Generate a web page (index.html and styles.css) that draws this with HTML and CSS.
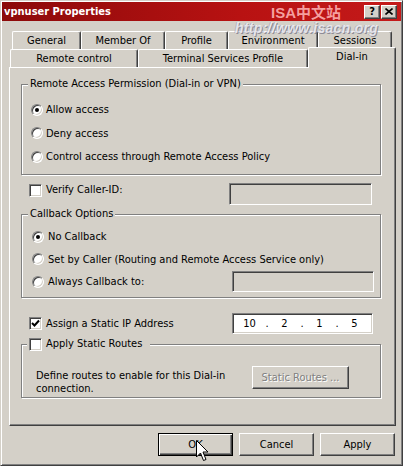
FILE: index.html
```html
<!DOCTYPE html>
<html lang="en">
<head>
    <meta charset="UTF-8">
    <title>vpnuser Properties</title>
    <link rel="stylesheet" href="styles.css">
</head>
<body>

    <div class="window">
        <div class="titlebar">
            <span class="title">vpnuser Properties</span>
            <div class="caption-buttons">
                <span class="cap-btn">?</span>
                <span class="cap-btn">
                    <svg width="8" height="7" viewBox="0 0 8 7"><path d="M0.5 0.5 L7.5 6.5 M7.5 0.5 L0.5 6.5" stroke="#000" stroke-width="1.6"/></svg>
                </span>
            </div>
        </div>

        <div class="watermark">
            <span class="wm-name">ISA中文站</span>
            <span class="wm-url">http://www.isacn.org</span>
        </div>

        <div class="tabs">
            <div class="tab-row back">
                <span class="tab w-general">General</span>
                <span class="tab w-member">Member Of</span>
                <span class="tab w-profile">Profile</span>
                <span class="tab w-env">Environment</span>
                <span class="tab w-sessions">Sessions</span>
            </div>
            <div class="tab-row front">
                <span class="tab w-remote">Remote control</span>
                <span class="tab w-terminal">Terminal Services Profile</span>
                <span class="tab w-dialin active">Dial-in</span>
            </div>
        </div>

        <div class="panel">
            <div class="group g-access">
                <div class="group-title">Remote Access Permission (Dial-in or VPN)</div>
                <div class="options">
                    <div class="option"><span class="radio checked"></span>Allow access</div>
                    <div class="option"><span class="radio"></span>Deny access</div>
                    <div class="option"><span class="radio"></span>Control access through Remote Access Policy</div>
                </div>
            </div>

            <div class="line-row verify">
                <span class="check"></span>
                <span class="label">Verify Caller-ID:</span>
                <span class="field disabled"></span>
            </div>

            <div class="group g-callback">
                <div class="group-title">Callback Options</div>
                <div class="options">
                    <div class="option"><span class="radio checked"></span>No Callback</div>
                    <div class="option"><span class="radio"></span>Set by Caller (Routing and Remote Access Service only)</div>
                    <div class="option"><span class="radio"></span>Always Callback to:<span class="field disabled"></span></div>
                </div>
            </div>

            <div class="line-row assign">
                <span class="check">
                    <svg width="9" height="9" viewBox="0 0 9 9"><path d="M1 4 L3.5 6.5 L8 1.5" fill="none" stroke="#000" stroke-width="2"/></svg>
                </span>
                <span class="label">Assign a Static IP Address</span>
                <span class="field ip">
                    <span class="octet">10</span><span class="dot">.</span>
                    <span class="octet">2</span><span class="dot">.</span>
                    <span class="octet">1</span><span class="dot">.</span>
                    <span class="octet">5</span>
                </span>
            </div>

            <div class="group g-routes">
                <div class="group-title"><span class="check"></span><span class="label">Apply Static Routes</span></div>
                <div class="routes-row">
                    <p class="routes-text">Define routes to enable for this Dial-in<br>connection.</p>
                    <button class="btn" disabled>Static Routes ...</button>
                </div>
            </div>
        </div>

        <div class="actions">
            <button class="btn default">OK</button>
            <button class="btn">Cancel</button>
            <button class="btn">Apply</button>
        </div>

        <!-- mouse pointer resting on OK -->
        <svg class="pointer" width="13" height="22" viewBox="0 0 13 22">
            <path d="M0.5 0.5 L0.5 17 L4.5 13 L7.5 20.5 L10 19.5 L7 12 L12 12 Z" fill="#fff" stroke="#000" stroke-width="1"/>
        </svg>
    </div>

</body>
</html>
```

FILE: styles.css
```css
* {
    margin: 0;
    padding: 0;
    box-sizing: border-box;
}

body {
    background-color: #d4d0c8;
    font-family: "DejaVu Sans Condensed", "DejaVu Sans", "Liberation Sans", sans-serif;
    font-stretch: condensed;
    font-size: 11px;
    color: #000;
}

.window {
    position: relative;
    width: 403px;
    height: 466px;
    padding: 1px;
    background-color: #d4d0c8;
    border: 1px solid;
    border-color: #d4d0c8 #404040 #404040 #d4d0c8;
    box-shadow: inset 1px 1px #fff, inset -1px -1px #808080;
}

/* title bar */
.titlebar {
    display: flex;
    align-items: center;
    height: 19px;
    padding: 0 4px 0 2px;
    background: linear-gradient(to right, #8c0a0a, #b81212 60%, #c41a1a);
}

.title {
    color: #fff;
    font-weight: bold;
}

.caption-buttons {
    display: flex;
    gap: 1px;
    margin-left: auto;
}

.cap-btn {
    display: flex;
    justify-content: center;
    align-items: center;
    width: 16px;
    height: 14px;
    background-color: #d4d0c8;
    border: 1px solid;
    border-color: #fff #404040 #404040 #fff;
    box-shadow: inset -1px -1px #808080;
    font-weight: bold;
    font-size: 11px;
    line-height: 1;
}

/* watermark stamped over the top of the dialog */
.watermark span {
    position: absolute;
    font-family: "Liberation Sans", "Noto Sans CJK SC", sans-serif;
    font-weight: bold;
    white-space: nowrap;
}

.wm-name {
    left: 270px;
    top: 0;
    font-size: 15px;
    color: rgba(255, 185, 185, 0.85);
}

.wm-url {
    left: 234px;
    top: 19px;
    font-size: 14px;
    font-style: italic;
    letter-spacing: 0.3px;
    color: rgba(245, 245, 250, 0.8);
    text-shadow: 1px 1px rgba(110, 110, 130, 0.7), -1px 0 rgba(150, 150, 170, 0.5);
}

/* tabs */
.tabs {
    padding-top: 10px;
}

.tab-row {
    display: flex;
    align-items: flex-start;
    height: 18px;
}

.tab-row.back {
    margin-left: 10px;
}

.tab-row.front {
    margin-left: 8px;
}

.tab {
    display: flex;
    justify-content: center;
    align-items: center;
    height: 18px;
    background-color: #d4d0c8;
    border-top: 1px solid #fff;
    border-left: 1px solid #fff;
    border-right: 1px solid #404040;
    border-radius: 2px 2px 0 0;
    box-shadow: inset -1px 0 #808080;
    white-space: nowrap;
}

.tab.active {
    position: relative;
    z-index: 1;
    height: 21px;
    margin-top: -2px;
    padding-bottom: 3px;
}

.w-general { width: 69px; }
.w-member { width: 84px; }
.w-profile { width: 63px; }
.w-env { width: 90px; }
.w-sessions { width: 74px; }
.w-remote { width: 128px; }
.w-terminal { width: 170px; }
.w-dialin { width: 88px; }

/* tab page */
.panel {
    width: 387px;
    height: 359px;
    margin-left: 7px;
    padding-left: 11px;
    border: 1px solid;
    border-color: #fff #404040 #404040 #fff;
    box-shadow: inset -1px -1px #808080;
}

.group {
    width: 360px;
    border: 1px solid #808080;
    box-shadow: 1px 1px #fff, inset 1px 1px #fff;
}

.group-title {
    width: fit-content;
    margin: -8px 0 0 6px;
    padding: 0 2px;
    line-height: 14px;
    background-color: #d4d0c8;
}

.g-access {
    margin-top: 16px;
    padding-bottom: 5px;
}

.g-access .options {
    margin-top: 7px;
}

.g-access .option {
    height: 23.5px;
    padding-left: 9px;
    gap: 3px;
}

.g-callback {
    margin-top: 9px;
    padding-bottom: 4px;
}

.g-callback .options {
    margin-top: 5px;
}

.g-callback .option {
    height: 22.5px;
    padding-left: 10px;
    gap: 4px;
}

.option {
    display: flex;
    align-items: center;
}

.option .field {
    width: 142px;
    height: 21px;
    margin-left: auto;
    margin-right: 6px;
}

.radio {
    position: relative;
    width: 12px;
    height: 12px;
    border-radius: 50%;
    background-color: #fff;
    border: 1px solid;
    border-color: #808080 #fff #fff #808080;
    box-shadow: inset 1px 1px #404040, inset -1px -1px #d4d0c8;
}

.radio.checked::after {
    content: "";
    position: absolute;
    left: 3px;
    top: 3px;
    width: 4px;
    height: 4px;
    border-radius: 50%;
    background-color: #000;
}

.check {
    display: flex;
    justify-content: center;
    align-items: center;
    flex-shrink: 0;
    width: 13px;
    height: 13px;
    background-color: #fff;
    border: 1px solid;
    border-color: #808080 #fff #fff #808080;
    box-shadow: inset 1px 1px #404040, inset -1px -1px #d4d0c8;
}

.field {
    background-color: #fff;
    border: 1px solid;
    border-color: #808080 #fff #fff #808080;
    box-shadow: inset 1px 1px #404040, inset -1px -1px #d4d0c8;
}

.field.disabled {
    background-color: #d4d0c8;
}

.line-row {
    display: flex;
    width: 360px;
    padding-left: 8px;
}

.line-row .label {
    margin-left: 4px;
    line-height: 14px;
}

.verify {
    margin-top: 8px;
    height: 22px;
    align-items: flex-start;
}

.verify .check {
    margin-top: 1px;
}

.verify .field {
    width: 143px;
    height: 22px;
    margin-left: auto;
    margin-right: 9px;
}

.assign {
    margin-top: 15px;
    height: 21px;
    align-items: center;
}

.field.ip {
    display: flex;
    align-items: center;
    width: 141px;
    height: 21px;
    margin-left: auto;
    margin-right: 8px;
    padding-left: 4px;
}

.octet {
    width: 25px;
    text-align: center;
}

.dot {
    width: 10px;
    text-align: center;
}

.g-routes {
    margin-top: 10px;
    padding-bottom: 2px;
}

.g-routes .group-title {
    display: flex;
    align-items: center;
    height: 14px;
    margin-left: 5px;
    padding: 0 8px 0 2px;
}

.g-routes .label {
    margin-left: 4px;
}

.routes-row {
    display: flex;
    align-items: flex-start;
    margin-top: 15px;
}

.routes-text {
    margin: 3px 0 0 14px;
    line-height: 13px;
}

.routes-row .btn {
    width: 97px;
    margin-left: auto;
    margin-right: 31px;
}

/* dialog buttons */
.actions {
    display: flex;
    justify-content: flex-end;
    gap: 6px;
    margin-top: 7px;
    padding-right: 6px;
}

.btn {
    width: 75px;
    height: 23px;
    background-color: #d4d0c8;
    border: 1px solid;
    border-color: #fff #404040 #404040 #fff;
    box-shadow: inset -1px -1px #808080;
    font: inherit;
    color: #000;
}

.btn.default {
    border-color: #000;
    box-shadow: inset 1px 1px #fff, inset -1px -1px #404040, inset -2px -2px #808080;
}

.btn:disabled {
    color: #808080;
    text-shadow: 1px 1px #fff;
}

.pointer {
    position: absolute;
    left: 195px;
    top: 439px;
}
```
